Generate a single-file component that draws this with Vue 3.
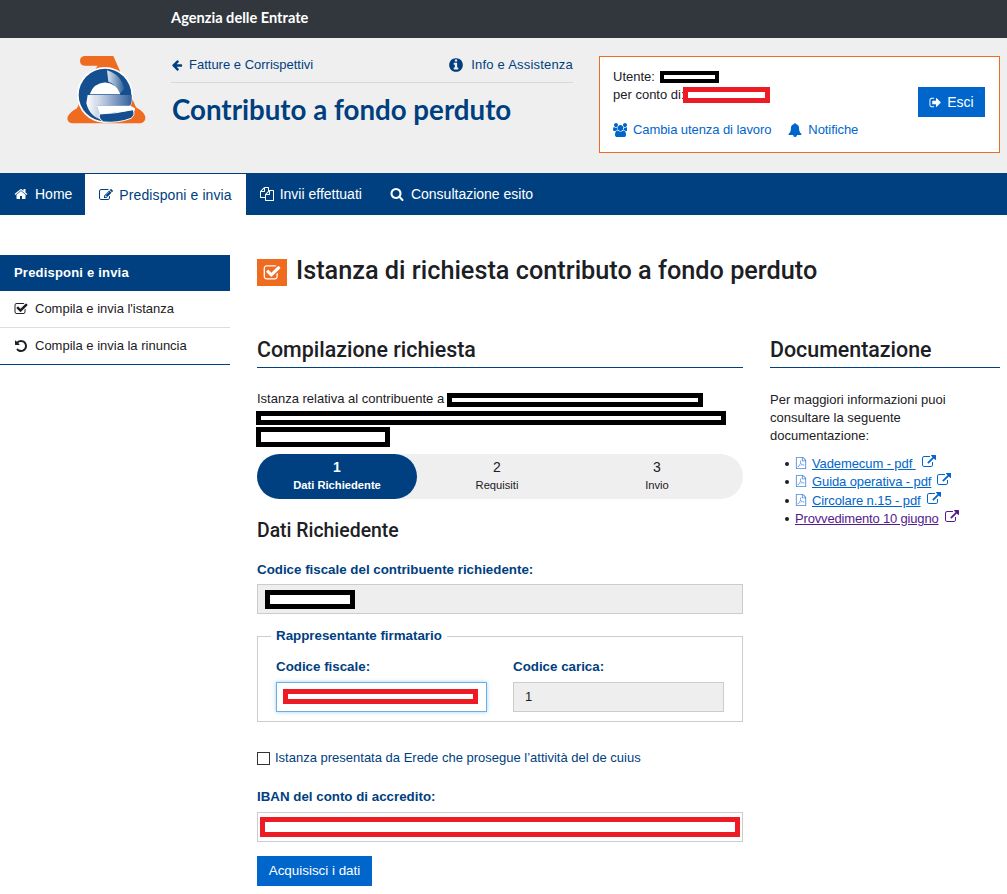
<script setup>
const tabs = [
  { label: 'Home', icon: 'home' },
  { label: 'Predisponi e invia', icon: 'edit', active: true },
  { label: 'Invii effettuati', icon: 'files' },
  { label: 'Consultazione esito', icon: 'search' }
]
const paths = {
  home: 'M1472 992v480q0 26-19 45t-45 19h-384v-384h-256v384h-384q-26 0-45-19t-19-45v-480q0-1 .5-3t.5-3l575-474 575 474q1 2 1 6zm223-69l-62 74q-8 9-21 11h-3q-13 0-21-7l-692-577-692 577q-12 8-24 7-13-2-21-11l-62-74q-8-10-7-23.5t11-21.5l719-599q32-26 76-26t76 26l244 204v-195q0-14 9-23t23-9h192q14 0 23 9t9 23v408l219 182q10 8 11 21.5t-7 23.5z',
  search: 'M1216 832q0-185-131.5-316.5t-316.5-131.5-316.5 131.5-131.5 316.5 131.5 316.5 316.5 131.5 316.5-131.5 131.5-316.5zm512 832q0 52-38 90t-90 38q-54 0-90-38l-343-342q-179 124-399 124-143 0-273.5-55.5t-225-150-150-225-55.5-273.5 55.5-273.5 150-225 225-150 273.5-55.5 273.5 55.5 225 150 150 225 55.5 273.5q0 220-124 399l343 343q37 37 37 90z',
  left: 'M1664 896v128q0 53-32.5 90.5t-84.5 37.5h-704l293 294q38 36 38 90t-38 90l-75 76q-37 37-90 37-52 0-91-37l-651-652q-37-37-37-90 0-52 37-91l651-650q38-38 91-38 52 0 90 38l75 74q38 38 38 91t-38 91l-293 293h704q52 0 84.5 37.5t32.5 90.5z',
  info: 'M1152 1376v-160q0-14-9-23t-23-9h-96v-512q0-14-9-23t-23-9h-320q-14 0-23 9t-9 23v160q0 14 9 23t23 9h96v320h-96q-14 0-23 9t-9 23v160q0 14 9 23t23 9h448q14 0 23-9t9-23zm-128-896v-160q0-14-9-23t-23-9h-192q-14 0-23 9t-9 23v160q0 14 9 23t23 9h192q14 0 23-9t9-23zm640 416q0 209-103 385.5t-279.5 279.5-385.5 103-385.5-103-279.5-279.5-103-385.5 103-385.5 279.5-279.5 385.5-103 385.5 103 279.5 279.5 103 385.5z',
  bell: 'M912 1696q0-16-16-16-59 0-101.5-42.5t-42.5-101.5q0-16-16-16t-16 16q0 73 51.5 124.5t124.5 51.5q16 0 16-16zm816-288q0 52-38 90t-90 38h-448q0 106-75 181t-181 75-181-75-75-181h-448q-52 0-90-38t-38-90q50-42 91-88t85-119.5 74.5-158.5 50-206 19.5-260q0-152 117-282.5t307-158.5q-8-19-8-39 0-40 28-68t68-28 68 28 28 68q0 20-8 39 190 28 307 158.5t117 282.5q0 139 19.5 260t50 206 74.5 158.5 85 119.5 91 88z',
  users: 'M593 896q-162 5-265 128h-134q-82 0-138-40.5t-56-118.5q0-353 124-353 6 0 43.5 21t97.5 42.5 119 21.5q67 0 133-23-5 37-5 66 0 139 81 256zm1071 637q0 120-73 189.5t-194 69.5h-874q-121 0-194-69.5t-73-189.5q0-53 3.5-103.5t14-109 26.5-108.5 43-97.5 62-81 85.5-53.5 111.5-20q10 0 43 21.5t73 48 107 48 135 21.5 135-21.5 107-48 73-48 43-21.5q61 0 111.5 20t85.5 53.5 62 81 43 97.5 26.5 108.5 14 109 3.5 103.5zm-1024-1277q0 106-75 181t-181 75-181-75-75-181 75-181 181-75 181 75 75 181zm704 384q0 159-112.5 271.5t-271.5 112.5-271.5-112.5-112.5-271.5 112.5-271.5 271.5-112.5 271.5 112.5 112.5 271.5zm576 225q0 78-56 118.5t-138 40.5h-134q-103-123-265-128 81-117 81-256 0-29-5-66 66 23 133 23 59 0 119-21.5t97.5-42.5 43.5-21q124 0 124 353zm-128-609q0 106-75 181t-181 75-181-75-75-181 75-181 181-75 181 75 75 181z',
  ext: 'M1408 928v320q0 119-84.5 203.5t-203.5 84.5h-832q-119 0-203.5-84.5t-84.5-203.5v-832q0-119 84.5-203.5t203.5-84.5h704q14 0 23 9t9 23v64q0 14-9 23t-23 9h-704q-66 0-113 47t-47 113v832q0 66 47 113t113 47h832q66 0 113-47t47-113v-320q0-14 9-23t23-9h64q14 0 23 9t9 23zm384-864v512q0 26-19 45t-45 19-45-19l-176-176-652 652q-10 10-23 10t-23-10l-114-114q-10-10-10-23t10-23l652-652-176-176q-19-19-19-45t19-45 45-19h512q26 0 45 19t19 45z',
  signout: 'M704 1440q0 4 1 20t.5 26.5-3 23.5-10 19.5-20.5 6.5h-320q-119 0-203.5-84.5t-84.5-203.5v-704q0-119 84.5-203.5t203.5-84.5h320q13 0 22.5 9.5t9.5 22.5q0 4 1 20t.5 26.5-3 23.5-10 19.5-20.5 6.5h-320q-66 0-113 47t-47 113v704q0 66 47 113t113 47h312l11.5 1 11.5 3 8 5.5 7 9 2 13.5zm928-544q0 26-19 45l-544 544q-19 19-45 19t-45-19-19-45v-288h-448q-26 0-45-19t-19-45v-384q0-26 19-45t45-19h448v-288q0-26 19-45t45-19 45 19l544 544q19 19 19 45z',
  check: 'M1472 930v318q0 119-84.5 203.5t-203.5 84.5h-832q-119 0-203.5-84.5t-84.5-203.5v-832q0-119 84.5-203.5t203.5-84.5h832q63 0 117 25 15 7 18 23 3 17-9 29l-49 49q-10 10-23 10-3 0-9-2-23-6-45-6h-832q-66 0-113 47t-47 113v832q0 66 47 113t113 47h832q66 0 113-47t47-113v-254q0-13 9-22l64-64q10-10 23-10 6 0 12 3 20 8 20 29zm231-489l-814 814q-24 24-57 24t-57-24l-430-430q-24-24-24-57t24-57l110-110q24-24 57-24t57 24l263 263 647-647q24-24 57-24t57 24l110 110q24 24 24 57t-24 57z',
  edit: 'M888 1184l116-116-152-152-116 116v56h96v96h56zm440-720q-16-16-33 1l-350 350q-17 17-1 33t33-1l350-350q17-17 1-33zm80 594v190q0 119-84.5 203.5t-203.5 84.5h-832q-119 0-203.5-84.5t-84.5-203.5v-832q0-119 84.5-203.5t203.5-84.5h832q63 0 117 25 15 7 18 23 3 17-9 29l-49 49q-14 14-32 8-23-6-45-6h-832q-66 0-113 47t-47 113v832q0 66 47 113t113 47h832q66 0 113-47t47-113v-126q0-13 9-22l64-64q15-15 35-7t20 29zm-96-738l288 288-672 672h-288v-288zm444 132l-92 92-288-288 92-92q27-27 68-27t68 27l152 152q27 27 27 68t-27 68z',
  undo: 'M1664 896q0 156-61 298t-164 245-245 164-298 61q-172 0-327-72.5t-264-204.5q-7-10-6.5-22.5t8.5-20.5l137-138q10-9 25-9 16 2 23 12 73 95 179 147t225 52q104 0 198.5-40.5t163.5-109.5 109.5-163.5 40.5-198.5-40.5-198.5-109.5-163.5-163.5-109.5-198.5-40.5q-98 0-188 35.5t-160 101.5l137 138q31 30 14 69-17 40-59 40h-448q-26 0-45-19t-19-45v-448q0-42 40-59 39-17 69 14l130 129q107-101 244.5-156.5t284.5-55.5q156 0 298 61t245 164 164 245 61 298z',
  files: 'M1696 384q40 0 68 28t28 68v1216q0 40-28 68t-68 28h-960q-40 0-68-28t-28-68v-288h-544q-40 0-68-28t-28-68v-672q0-40 20-88t48-76l408-408q28-28 76-48t88-20h416q40 0 68 28t28 68v328q68-40 128-40h416zm-544 213l-299 299h299v-299zm-640-384l-299 299h299v-299zm196 647l316-316v-416h-384v416q0 40-28 68t-68 28h-416v640h512v-256q0-40 20-88t48-76zm956 804v-1152h-384v416q0 40-28 68t-68 28h-416v640h896z',
  pdf: 'M1596 380q28 28 48 76t20 88v1152q0 40-28 68t-68 28h-1344q-40 0-68-28t-28-68v-1600q0-40 28-68t68-28h896q40 0 88 20t76 48zm-444-244v376h376q-10-29-22-41l-313-313q-12-12-41-22zm384 1528v-1024h-416q-40 0-68-28t-28-68v-416h-768v1536h1280zm-514-593q33 26 84 56 59-7 117-7 147 0 177 49 16 22 2 52 0 1-1 2l-2 2v1q-6 38-71 38-48 0-115-20t-130-53q-221 24-392 83-153 262-242 262-15 0-28-7l-24-12q-1-1-6-5-10-10-6-36 9-40 56-91.5t132-96.5q14-9 23 6 2 2 2 4 52-85 107-197 68-136 104-262-24-82-30.5-159.5t6.5-127.5q11-40 42-40h22q23 0 35 15 18 21 9 68-2 6-4 8 1 3 1 8v30q-2 123-14 192 55 164 146 238zm-576 411q52-24 137-158-51 40-87.5 84t-49.5 74zm398-920q-15 42-2 132 1-7 7-44 0-3 7-43 1-4 4-8-1-1-1-2-1-2-1-3-1-22-13-36 0 1-1 2v2zm-124 661q135-54 284-81-2-1-13-9.5t-16-13.5q-76-67-127-176-27 86-83 197-30 56-45 83zm646-16q-24-24-140-24 76 28 124 28 14 0 18-1 0-1-2-3z'
}
const docs = [
  { label: 'Vademecum - pdf ', pdf: true },
  { label: 'Guida operativa - pdf', pdf: true },
  { label: 'Circolare n.15 - pdf', pdf: true },
  { label: 'Provvedimento 10 giugno', visited: true }
]
const steps = [
  { n: 1, label: 'Dati Richiedente', active: true },
  { n: 2, label: 'Requisiti' },
  { n: 3, label: 'Invio' }
]
</script>

<template>
  <div class="page">
    <div class="topbar">Agenzia delle Entrate</div>

    <header class="head">
      <svg class="logo" viewBox="0 0 300 270" width="100" height="90">
        <defs>
          <linearGradient id="band" x1="0" x2="1" y1="0" y2="0">
            <stop offset="0" stop-color="#ffffff" />
            <stop offset="0.3" stop-color="#c3cfe2" />
            <stop offset="1" stop-color="#2f5f9d" />
          </linearGradient>
          <linearGradient id="wedge" x1="0" x2="1" y1="0" y2="0">
            <stop offset="0" stop-color="#dfe6f0" />
            <stop offset="1" stop-color="#2f6099" />
          </linearGradient>
          <linearGradient id="cres" x1="0" x2="1" y1="0" y2="0">
            <stop offset="0" stop-color="#ffffff" />
            <stop offset="1" stop-color="#a9bbd6" />
          </linearGradient>
        </defs>
        <path fill="#ee6b20" d="M88 33H175L243 187Q272 203 271 221Q268 235 250 235H55Q37 235 37 220Q40 204 66 190L113 85L128 62H88Q75 60 75 47Q76 35 88 33Z" />
        <circle cx="150" cy="150" r="84" fill="#fff" />
        <circle cx="150" cy="150" r="79" fill="#154f8f" />
        <path fill="url(#wedge)" d="M156 76Q198 88 208 132L194 146Q182 116 160 110Z" />
        <path fill="#fff" d="M104 148Q115 115 150 112Q185 115 196 148Z" />
        <path fill="#154f8f" d="M150 88L160 112H140Z" />
        <path fill="url(#band)" d="M100 150H230Q232 170 226 182H125Q105 175 100 150Z" />
        <path fill="url(#cres)" d="M98 150H124Q118 190 152 228Q105 220 94 175Z" />
        <path fill="#fff" d="M125 182H226L240 190V197L135 207Z" />
        <path fill="#154f8f" stroke="#fff" stroke-width="3" d="M133 207Q180 206 234 194Q242 210 228 220Q190 235 146 231Q130 222 133 207Z" />
      </svg>

      <div class="brand">
        <div class="crumbs">
          <a class="crumb"><svg class="ic" viewBox="0 0 1792 1792"><path :d="paths.left" /></svg>Fatture e Corrispettivi</a>
          <a class="crumb info-link"><svg class="ic info" viewBox="0 0 1792 1792"><path :d="paths.info" /></svg>Info e Assistenza</a>
        </div>
        <div class="app-title">Contributo a fondo perduto</div>
      </div>

      <div class="userbox">
        <div class="userinfo">
          <div class="uline">Utente:&nbsp;<span class="mask black u1"></span></div>
          <div class="uline">per conto di:<span class="mask red u2"></span></div>
          <div class="ulinks">
            <a><svg class="ic" viewBox="0 0 1792 1792"><path :d="paths.users" /></svg>Cambia utenza di lavoro</a>
            <a><svg class="ic" viewBox="0 0 1792 1792"><path :d="paths.bell" /></svg>Notifiche</a>
          </div>
        </div>
        <button class="btn esci"><svg class="ic" viewBox="0 0 1792 1792"><path :d="paths.signout" /></svg>Esci</button>
      </div>
    </header>

    <nav class="nav">
      <a v-for="t in tabs" :key="t.label" class="tab" :class="{ active: t.active }">
        <svg class="ic" viewBox="0 0 1792 1792"><path :d="paths[t.icon]" /></svg>{{ t.label }}
      </a>
    </nav>

    <div class="main">
      <aside class="side">
        <div class="side-h">Predisponi e invia</div>
        <a class="side-i"><svg class="ic" viewBox="0 0 1792 1792"><path :d="paths.check" /></svg>Compila e invia l'istanza</a>
        <a class="side-i last"><svg class="ic" viewBox="0 0 1792 1792"><path :d="paths.undo" /></svg>Compila e invia la rinuncia</a>
      </aside>

      <section class="content">
        <h1 class="title">
          <span class="title-ic"><svg viewBox="0 0 1792 1792" width="18" height="18"><path :d="paths.check" /></svg></span>
          Istanza di richiesta contributo a fondo perduto
        </h1>

        <div class="cols">
          <div class="col-main">
            <h2 class="sec">Compilazione richiesta</h2>

            <div class="rel">
              <div class="rel1">Istanza relativa al contribuente a&nbsp;<span class="mask black r1"></span></div>
              <span class="mask black r2"></span>
              <span class="mask black r3"></span>
            </div>

            <div class="stepper">
              <div v-for="s in steps" :key="s.n" class="step" :class="{ active: s.active }">
                <div class="step-n">{{ s.n }}</div>
                <div class="step-l">{{ s.label }}</div>
              </div>
            </div>

            <h3 class="sub">Dati Richiedente</h3>

            <label class="lab">Codice fiscale del contribuente richiedente:</label>
            <div class="field ro first"><span class="mask black f1"></span></div>

            <fieldset class="fs">
              <legend>Rappresentante firmatario</legend>
              <div class="fs-row">
                <div class="fs-col">
                  <label class="lab">Codice fiscale:</label>
                  <div class="field focus"><span class="mask red f2"></span></div>
                </div>
                <div class="fs-col">
                  <label class="lab">Codice carica:</label>
                  <div class="field ro val">1</div>
                </div>
              </div>
            </fieldset>

            <label class="chk"><input type="checkbox" />Istanza presentata da Erede che prosegue l’attività del de cuius</label>

            <label class="lab iban">IBAN del conto di accredito:</label>
            <div class="field tight"><span class="mask red f3"></span></div>

            <button class="btn acq">Acquisisci i dati</button>
          </div>

          <aside class="col-doc">
            <h2 class="sec">Documentazione</h2>
            <p class="doc-p">Per maggiori informazioni puoi consultare la seguente documentazione:</p>
            <ul class="doc-l">
              <li v-for="d in docs" :key="d.label">
                <svg v-if="d.pdf" class="ic pdf" viewBox="0 0 1792 1792"><path :d="paths.pdf" /></svg>
                <a :class="{ visited: d.visited }">{{ d.label }}</a>
                <svg class="ic ext" :class="{ visited: d.visited }" viewBox="0 0 1792 1792"><path :d="paths.ext" /></svg>
              </li>
            </ul>
          </aside>
        </div>
      </section>
    </div>
  </div>
</template>

<style>
html, body { margin: 0; padding: 0; background: #fff; }
</style>

<style scoped>
.page {
  font-family: "Liberation Sans", Arial, sans-serif;
  font-size: 13px;
  line-height: 18px;
  color: #1c2024;
  width: 1007px;
  height: 894px;
  overflow: hidden;
}
.ic { width: 14px; height: 14px; fill: currentColor; flex: none; }
.mask { display: block; box-sizing: border-box; background: #fff; border: 5px solid #000; }
.mask.red { border-color: #ed1c24; }

.topbar {
  height: 38px;
  background: #32373e;
  color: #fff;
  font-family: Lato, sans-serif;
  font-weight: 700;
  font-size: 14.6px;
  line-height: 35px;
  padding-left: 171px;
}

.head {
  height: 135px;
  background: #efefef;
  display: flex;
  align-items: flex-start;
  padding-left: 55px;
  box-sizing: border-box;
}
.logo { margin-top: 7px; width: 100px; flex: none; }
.brand { width: 402px; margin-left: 16px; margin-top: 17px; color: #003f7f; }
.crumbs {
  display: flex;
  justify-content: space-between;
  height: 27px;
  border-bottom: 1px solid #d8d8d8;
  font-size: 13px;
}
.crumb { display: flex; align-items: center; height: 18px; margin-top: 1px; }
.crumb .ic { width: 12px; height: 12px; margin-right: 6px; }
.crumb .ic.info { width: 16px; height: 16px; margin-right: 7px; }
.info-link { letter-spacing: .2px; }
.app-title {
  font-family: Lato, sans-serif;
  font-weight: 700;
  font-size: 27.7px;
  line-height: 54px;
  padding-left: 1px;
}

.userbox {
  box-sizing: border-box;
  width: 401px;
  height: 97px;
  margin: 18px 0 0 26px;
  background: #fff;
  border: 1px solid #ee6b20;
  display: flex;
  justify-content: space-between;
  padding: 11px 14px 0 13px;
}
.uline { display: flex; align-items: center; height: 18px; }
.u1 { width: 59px; height: 12px; margin-left: 1px; border-width: 4px; }
.u2 { width: 87px; height: 16px; margin-left: -2px; }
.ulinks { display: flex; gap: 17px; margin-top: 17px; color: #0066cc; letter-spacing: -.08px; }
.ulinks a { display: flex; align-items: center; }
.ulinks .ic { margin-right: 6px; }
.btn {
  border: 0;
  background: #0066cc;
  color: #fff;
  font: 13.4px/18px "Liberation Sans", Arial, sans-serif;
  height: 30px;
  padding: 0;
  display: flex;
  align-items: center;
  justify-content: center;
}
.esci { width: 67px; margin-top: 19px; font-size: 14px; }
.esci .ic { margin-right: 5px; width: 13px; height: 13px; }

.nav { height: 42px; background: #004080; display: flex; }
.tab {
  display: flex;
  align-items: center;
  color: #fff;
  padding: 0 14px;
  font-size: 14px;
}
.tab .ic { margin-right: 6px; }
.tab:first-child { padding-right: 13px; }
.tab:first-child .ic, .tab:last-child .ic { margin-right: 7px; }
.tab.active { background: #fff; color: #004080; margin-top: 1px; letter-spacing: .1px; }

.main { display: flex; padding-top: 40px; }
.side { width: 230px; flex: none; }
.side-h {
  height: 36px;
  background: #004080;
  color: #fff;
  font-weight: 700;
  font-size: 13px;
  line-height: 35px;
  padding-left: 14px;
  letter-spacing: .2px;
}
.side-i {
  display: flex;
  align-items: center;
  box-sizing: border-box;
  height: 37px;
  padding-left: 14px;
  font-size: 13px;
  border-bottom: 1px solid #ddd;
}
.side-i.last { border-bottom-color: #004080; }
.side-i .ic { margin-right: 7px; width: 14px; height: 14px; }

.content { margin-left: 27px; width: 743px; }
.title {
  margin: 0;
  display: flex;
  align-items: center;
  height: 32px;
  font-family: Roboto, Lato, sans-serif;
  font-weight: 500;
  font-size: 25.27px;
  gap: 9px;
}
.title-ic {
  width: 30px;
  height: 27px;
  margin-top: 3px;
  background: #ee6b20;
  color: #fff;
  display: flex;
  align-items: center;
  justify-content: center;
}
.title-ic svg { fill: #fff; }

.cols { display: flex; gap: 27px; padding-top: 48px; }
.col-main { width: 486px; flex: none; }
.col-doc { width: 230px; flex: none; }
.sec {
  margin: 0;
  height: 32px;
  box-sizing: content-box;
  border-bottom: 1px solid #004080;
  font-family: Roboto, Lato, sans-serif;
  font-weight: 500;
  font-size: 21.4px;
  line-height: 30px;
}
.rel { padding-top: 22px; height: 64px; }
.rel1 { display: flex; align-items: center; height: 18px; font-size: 13px; }
.r1 { width: 256px; height: 14px; margin-top: 1px; margin-left: -1px; }
.r2 { width: 470px; height: 14px; margin: 3px 0 0 -1px; }
.r3 { width: 134px; height: 20px; margin: 2px 0 0 -1px; }

.stepper {
  height: 45px;
  border-radius: 23px;
  background: #efefef;
  display: flex;
  font-size: 14px;
}
.step { width: 160px; text-align: center; padding-top: 4px; box-sizing: border-box; border-radius: 23px; }
.step-n { line-height: 18px; }
.step-l { font-size: 11.2px; line-height: 18px; }
.step.active { background: #004080; color: #fff; font-weight: 700; }

.sub {
  margin: 19px 0 0;
  font-family: Roboto, Lato, sans-serif;
  font-weight: 500;
  font-size: 19.4px;
  line-height: 26px;
}
.lab {
  display: block;
  color: #004080;
  font-weight: 700;
  font-size: 13.33px;
  line-height: 18px;
}
.sub + .lab { margin-top: 17px; }
.field {
  box-sizing: border-box;
  height: 30px;
  border: 1px solid #ccc;
  background: #fff;
  margin-top: 6px;
}
.field.first { margin-top: 5px; }
.field.ro { background: #eee; }
.f1 { width: 90px; height: 19px; margin: 5px 0 0 7px; }
.fs {
  margin: 14px 0 0;
  padding: 14px 18px 0;
  border: 1px solid #ccc;
  height: 94px;
  box-sizing: border-box;
  min-width: 0;
}
.fs legend {
  padding: 0 5px;
  margin-left: -5px;
  color: #004080;
  font-weight: 700;
  font-size: 13.33px;
  line-height: 16px;
}
.fs-row { display: flex; gap: 26px; }
.fs-col { width: 211px; }
.field.focus {
  border-color: #66afe9;
  box-shadow: 0 0 4px rgba(102, 175, 233, .6);
}
.f2 { width: 195px; height: 15px; margin: 6px 0 0 6px; }
.val { line-height: 28px; padding-left: 11px; }
.chk {
  display: flex;
  align-items: center;
  margin-top: 27px;
  height: 18px;
  color: #004080;
  font-size: 13px;
}
.chk input {
  appearance: none;
  box-sizing: border-box;
  width: 13px;
  height: 13px;
  margin: 1px 5px 0 0;
  background: #fff;
  border: 1px solid #333;
}
.lab.iban { margin-top: 21px; }
.f3 { width: 480px; height: 20px; margin: 4px 0 0 2px; }
.acq { width: 115px; margin-top: 14px; }

.doc-p { margin: 23px 0 0; font-size: 13px; line-height: 18px; }
.doc-l { margin: 10px 0 0; padding: 0 0 0 25px; font-size: 13px; line-height: 18.4px; list-style: none; }
.doc-l li { white-space: pre; }
.doc-l li::before {
  content: "";
  display: inline-block;
  width: 4px;
  height: 4px;
  border-radius: 50%;
  background: #1c2024;
  margin: 0 6px 2px -10px;
}
.doc-l a { color: #0066cc; text-decoration: underline; letter-spacing: -.1px; }
.doc-l a.visited { color: #551a8b; letter-spacing: -.17px; }
.doc-l .ic { vertical-align: -1px; width: 12px; height: 12px; }
.doc-l .pdf { color: #4a86d8; margin-right: 5px; }
.doc-l .ext { color: #0066cc; margin-left: 6px; width: 14px; height: 14px; }
.doc-l .ext.visited { color: #551a8b; }
</style>
